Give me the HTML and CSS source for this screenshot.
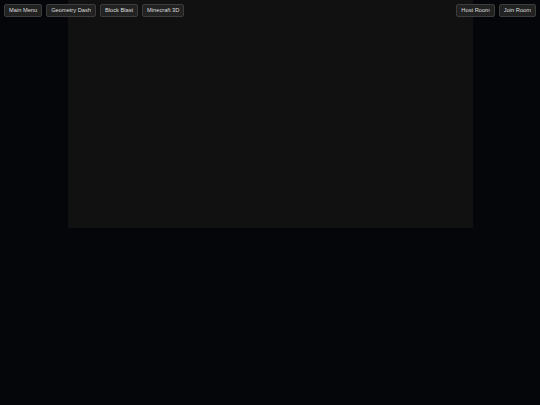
FILE: index.html
```html
<!DOCTYPE html>
<html>
<head>
<meta charset="utf-8">
<link rel="stylesheet" href="styles.css">
</head>
<body>
<div class="stage">
  <div class="canvas"></div>
</div>
<div class="toolbar">
  <div class="group">
    <button class="btn">Main Menu</button>
    <button class="btn">Geometry Dash</button>
    <button class="btn">Block Blast</button>
    <button class="btn">Minecraft 3D</button>
  </div>
  <div class="group">
    <button class="btn">Host Room</button>
    <button class="btn">Join Room</button>
  </div>
</div>
</body>
</html>
```
FILE: styles.css
```css
html, body {
  margin: 0;
  padding: 0;
  width: 100%;
  height: 100%;
  background: #05060a;
  overflow: hidden;
  font-family: "Liberation Sans", Arial, sans-serif;
}
.stage {
  display: flex;
  justify-content: center;
  align-items: flex-start;
}
.canvas {
  width: 405px;
  height: 228px;
  background: #111111;
}
.toolbar {
  position: absolute;
  top: 4px;
  left: 4px;
  right: 4px;
  display: flex;
  justify-content: space-between;
}
.group {
  display: flex;
  gap: 4px;
}
.btn {
  margin: 0;
  height: 13px;
  padding: 0 4px;
  background: #222222;
  color: #dddddd;
  border: 1px solid #3c3c3c;
  border-radius: 2px;
  font-family: "Liberation Sans", Arial, sans-serif;
  font-size: 5.7px;
  line-height: 11px;
}
```
